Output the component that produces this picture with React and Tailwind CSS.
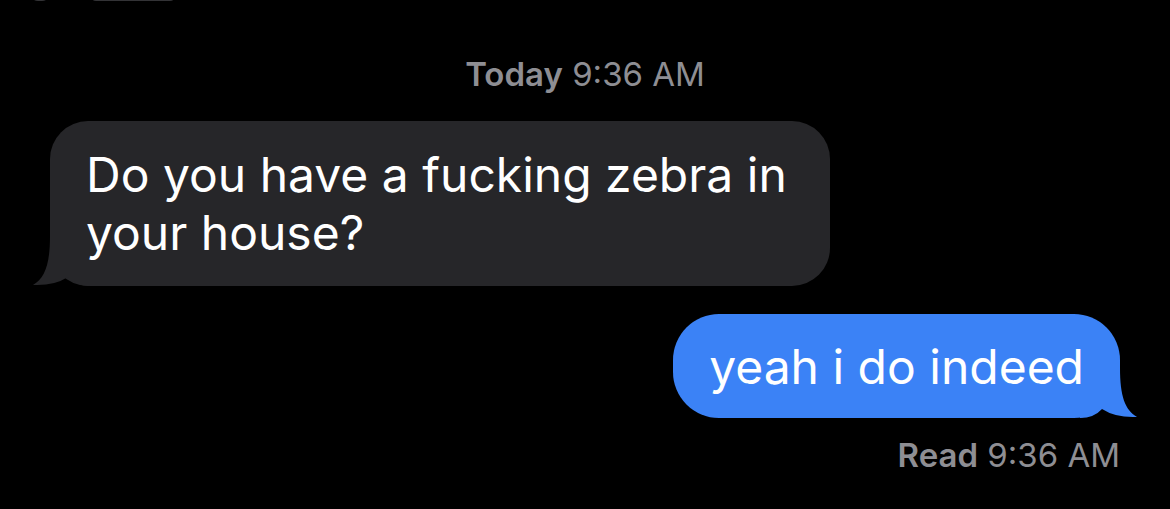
export default function App() {
  const font = { fontFamily: "Inter, 'Noto Sans', sans-serif" };

  return (
    <div
      className="relative w-[1170px] h-[509px] overflow-hidden bg-black text-white antialiased"
      style={font}
    >
      {/* bits of the previous row cut off at the top edge */}
      <div className="absolute top-[-7px] left-[30px] h-[8px] w-[20px] rounded-b-full bg-[#333336]" />
      <div className="absolute top-[-7px] left-[90px] h-[8px] w-[86px] rounded-b-[6px] bg-[#333336]" />

      <div className="flex flex-col">
        <p className="pt-[55px] text-center text-[33px] leading-[38px] text-[#8e8e93]">
          <span className="font-semibold">Today</span> 9:36 AM
        </p>

        <div className="relative ml-[50px] mt-[28px] w-[780px] rounded-[38px] bg-[#262629] pl-[36px] pr-[24px] pt-[25px] pb-[24px]">
          <svg
            className="absolute left-[-20px] bottom-0"
            width="60"
            height="50"
            viewBox="0 0 60 50"
          >
            <path
              d="M20 0 C20 28 15 42 3 49 Q24 50 38 41 Q46 50 60 50 L60 0 Z"
              fill="#262629"
            />
          </svg>
          <p className="relative text-[48px] leading-[58px]">
            Do you have a fucking zebra in
            <br />
            your house?
          </p>
        </div>

        <div className="relative self-end mr-[50px] mt-[28px] rounded-[46px] bg-[#3b82f6] pl-[36px] pr-[36px] pt-[24px] pb-[22px]">
          <svg
            className="absolute right-[-20px] bottom-0"
            width="60"
            height="50"
            viewBox="0 0 60 50"
          >
            <path
              d="M40 0 C40 28 45 42 57 49 Q36 50 22 41 Q14 50 0 50 L0 0 Z"
              fill="#3b82f6"
            />
          </svg>
          <p className="relative text-[48px] leading-[58px] whitespace-nowrap">yeah i do indeed</p>
        </div>

        <p className="mt-[18px] pr-[50px] text-right text-[33px] leading-[38px] text-[#8e8e93]">
          <span className="font-semibold">Read</span> 9:36 AM
        </p>
      </div>
    </div>
  );
}
